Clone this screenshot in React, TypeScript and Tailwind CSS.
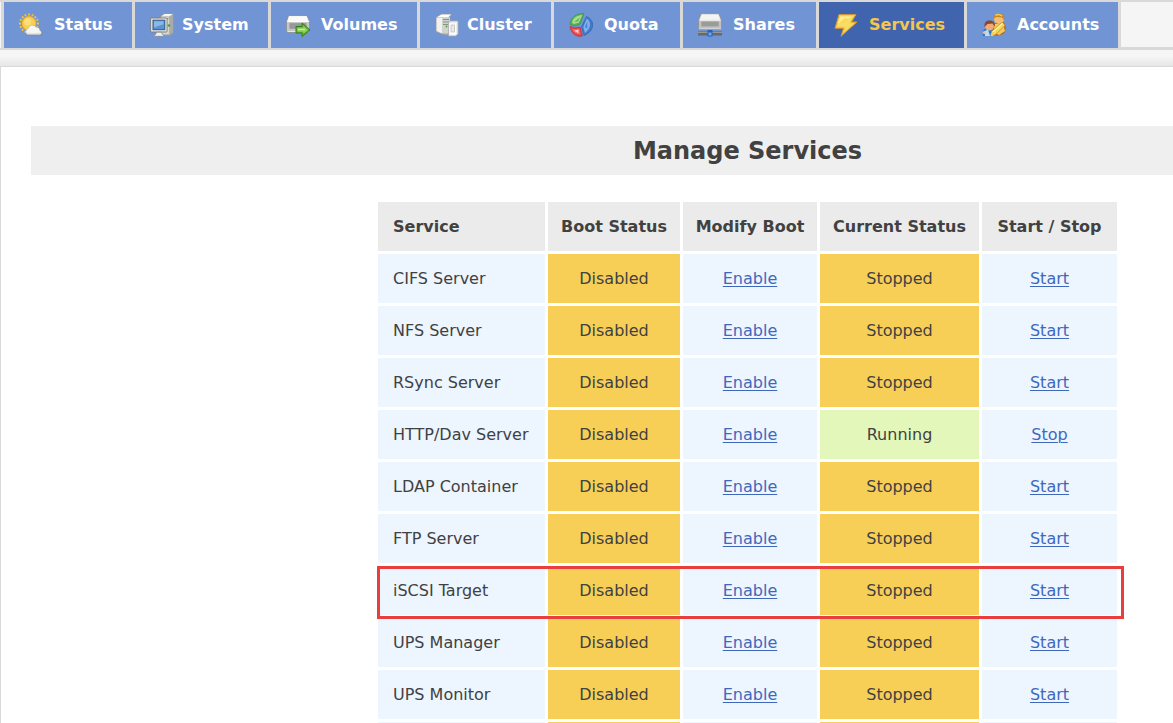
import type { ReactNode } from "react";

function StatusIcon() {
  return (
    <svg viewBox="0 0 24 24" className="size-6 shrink-0" aria-hidden="true">
      <g stroke="#f5c233" strokeWidth="1.9" strokeDasharray="2 1">
        <path d="M10 0.500v21M0 10.500h20M3 3.500l14 14M17 3.500l-14 14M6 1.300l8 18.400M14 1.300L6 19.700M0.800 6.500l18.400 8M19.200 6.500l-18.400 8" />
      </g>
      <circle cx="10" cy="10.500" r="7.400" fill="#eeb12c" />
      <circle cx="10" cy="10.500" r="6.400" fill="#fbcf4e" />
      <circle cx="8.500" cy="9" r="3.500" fill="#fde07a" />
      <path d="M10 22.600a3.400 3.400 0 0 1-.2-6.400 4.600 4.600 0 0 1 8.200-2.200 3.400 3.400 0 0 1 3.600 3.400 2.800 2.800 0 0 1 .6 5.200z" fill="#7c879e" />
      <path d="M9 21.500a3 3 0 0 1 .2-5.800 4.400 4.400 0 0 1 8-1.500 3.200 3.200 0 0 1 3.500 3.300 2.100 2.100 0 0 1 .3 4z" fill="#f5f5f5" stroke="#bfc2c8" strokeWidth=".6" />
      <path d="M8.500 19.500c3 1.200 8 1 12.500 0l-.5 1.600H9z" fill="#dcdfe4" />
    </svg>
  );
}

function SystemIcon() {
  return (
    <svg viewBox="0 0 24 24" className="size-6 shrink-0" aria-hidden="true">
      <path d="M10 3l4-2.500h9.500v20l-3 2h-9z" fill="#9a9b99" />
      <path d="M11 3.500L14.500 1H23l-3.500 2.500z" fill="#f4f4f1" />
      <path d="M11 4h8.500v17.500H11z" fill="#d5d6d1" />
      <path d="M19.500 4L23 1.500v18l-3.500 2z" fill="#aaaba6" />
      <path d="M12 5.500h6.500" stroke="#858782" />
      <circle cx="19" cy="12.500" r="1.300" fill="#39a935" />
      <rect x=".6" y="5" width="16.500" height="14" rx="1" fill="#e6e6e1" stroke="#777b7d" strokeWidth=".9" />
      <rect x="3" y="7.200" width="11.800" height="9.500" fill="#5a92d2" stroke="#315a8d" />
      <path d="M4 8.300h9.500v3L4 14.500z" fill="#8ab8e8" />
      <path d="M6.500 19.200h5l1 2.300c2 .4 1.500 1.800 0 1.800h-7c-1.500 0-2-1.400 0-1.800z" fill="#f0f0ec" stroke="#81817f" strokeWidth=".7" />
    </svg>
  );
}

function VolumesIcon() {
  return (
    <svg viewBox="0 0 24 24" className="size-6 shrink-0" aria-hidden="true">
      <path d="M2.500 2.500h18.500l2.500 6v9.500l-1 1.500h-21l-1-1.500v-9.500z" fill="#e8e8e6" stroke="#868a8e" strokeWidth=".8" />
      <path d="M3.500 3.300h16.800l2 4.700H1.700z" fill="#fafafa" />
      <path d="M1 9h22v9H1z" fill="#c6c8c6" />
      <path d="M3.500 10.500h17v5h-17z" fill="#a9aba9" />
      <path d="M3.500 11h17M3.500 13h17M3.500 15h8" stroke="#848786" strokeWidth="1" />
      <path d="M1.500 8.500h21" stroke="#fff" />
      <path d="M10 13.500h6v-3.500l8 7-8 6.500v-3.500h-6z" fill="#64af37" stroke="#347d20" strokeLinejoin="round" />
      <path d="M11.300 14.800h6v-2l4.500 4.200-4.500 3.500v-1.800h-6z" fill="#93d15c" />
      <path d="M12 16.500h7" stroke="#c9eba0" strokeWidth="1.200" />
    </svg>
  );
}

function ClusterIcon() {
  return (
    <svg viewBox="0 0 24 24" className="size-6 shrink-0" aria-hidden="true">
      <path d="M1 4l5-3h11l-2 3v17l-4 1.500L1 19z" fill="#a2a5a7" />
      <path d="M1.500 4.500l5-3H16l-3 3z" fill="#fff" />
      <path d="M1.500 5h5.500v15.500l-5.500-2.500z" fill="#f1f1ee" />
      <path d="M7 4.500h8V20.500H7z" fill="#d0d2ce" />
      <path d="M8 6.500h6M8 9h6M8 11.500h5" stroke="#8b8f8c" />
      <circle cx="11.500" cy="13.500" r="1" fill="#46ac3d" />
      <path d="M13.500 9.500l2-1.500h7.500v12.500l-2 2.500h-7.500z" fill="#efefed" stroke="#a6abaf" strokeWidth=".8" />
      <path d="M14.500 10.500h6.500v11h-6.500z" fill="#fff" />
      <rect x="16" y="12" width="3.500" height="7" fill="#eaeae7" stroke="#b4b6b3" strokeWidth=".7" />
    </svg>
  );
}

function QuotaIcon() {
  return (
    <svg viewBox="0 0 24 24" className="size-6 shrink-0" aria-hidden="true">
      <path d="M1 11.500C1.500 4.500 7 .3 15 .5L11 11 6 13z" fill="#58b255" stroke="#3b9347" strokeWidth=".7" />
      <path d="M3 9.800C4 5 8 2.300 13.200 2l-3.200 7.500-5 1.500z" fill="#a6dc90" />
      <path d="M5.300 9.200L11 4.300 9 8.300z" fill="#57b04f" />
      <path d="M17.500 3.500c8.500 3.500 8.500 14.500-2.500 19L12.500 14z" fill="#4379c8" stroke="#3162a8" strokeWidth=".7" />
      <path d="M17.800 5.500c4.500 3.500 4.500 9.500-1.800 14.500L14.300 14z" fill="#82b0ec" />
      <path d="M18.300 8.500v7l-2.500-1.500z" fill="#4b84d0" />
      <path d="M1 13.500l5 1.500 5-1 2.500 9C7.500 24.500 2 20.500 1 13.500z" fill="#e23e44" stroke="#bd3642" strokeWidth=".7" />
      <path d="M2.700 15.500l3.500.8 4-.8 1.700 6c-4 .5-7.500-1.500-9.200-6z" fill="#f06366" />
      <path d="M5 17.800l4.500-1.300v3.800z" fill="#ffc9c6" />
    </svg>
  );
}

function SharesIcon() {
  return (
    <svg viewBox="0 0 24 24" className="size-6 shrink-0" aria-hidden="true">
      <path d="M3 .7h18l2.500 6.500v8.500l-1 1h-21l-1-1v-8.500z" fill="#e0e0dd" stroke="#898c91" strokeWidth=".8" />
      <path d="M4 1.500h16l1.700 4.500H2.300z" fill="#f4f4f3" />
      <path d="M1 7.500h22v8H1z" fill="#c1c2bf" />
      <rect x="3.500" y="8.700" width="17" height="4.600" fill="#8c8f8c" />
      <path d="M4 10h16M4 12h16" stroke="#b4b6b2" strokeWidth=".7" />
      <path d="M2 7h20" stroke="#fff" />
      <rect y="18.500" width="24" height="4" fill="#66696d" />
      <path d="M0 19.500h24" stroke="#97989a" />
      <path d="M9.500 17h5v6.500h-5z" fill="#2463bd" />
      <rect x="10.500" y="19.500" width="3" height="3" fill="#69a8f5" />
    </svg>
  );
}

function ServicesIcon() {
  return (
    <svg viewBox="0 0 24 24" className="size-6 shrink-0" aria-hidden="true">
      <path d="M5 1.500h17l-4.500 7.500h5.500L7 23.300l2.500-8H1z" fill="#f6ce43" stroke="#cf9637" strokeLinejoin="round" />
      <path d="M6 3h13.500l-4.500 7.500h5L9.800 19l2-5.200H3.200z" fill="#f9dc68" />
      <path d="M6.500 3.500h11L12.500 10H3.800z" fill="#fdeb98" />
      <path d="M10 5.500h6l-4 5H5z" fill="#f9d955" />
    </svg>
  );
}

function AccountsIcon() {
  return (
    <svg viewBox="0 0 24 24" className="size-6 shrink-0" aria-hidden="true">
      <path d="M10 19l2-8 4-2h6l2 6-2 6-8 2z" fill="#b66b29" />
      <path d="M13 11h8l2 7-6 4-6-3z" fill="#f2cb5b" />
      <circle cx="17" cy="6" r="5" fill="#f7bd76" />
      <path d="M11.500 6C11 2 14 0 17 .5l1-.5 1 1c3 .5 4 3 3 6l-2-2.500-6-.5z" fill="#c9881c" />
      <path d="M13.500 2.500c2-1.500 5-1 6.500.5" stroke="#f6cf54" strokeWidth="1.500" fill="none" />
      <path d="M.5 23l1-6 4-3h5l3 4-1 5z" fill="#2d7ac8" />
      <circle cx="7.500" cy="13" r="4.500" fill="#efaa76" />
      <path d="M2.500 14c-.5-5 2-6.500 5-6.500 4 0 6 2.500 5 6l-2-3-5 .5z" fill="#88482e" />
      <path d="M3 18l3-1.500 2 6.500H3z" fill="#b9dcf7" />
      <path d="M9.500 18.500L20.500 9l2.500 3.500L13 22l-3.500.5z" fill="#f3d557" stroke="#bf872a" strokeWidth=".7" />
      <path d="M11 19L20.500 10.500" stroke="#fff1a1" strokeWidth="1.400" />
      <path d="M9 19.500l3 3.500H8.500z" fill="#f7c087" />
      <circle cx="2.500" cy="19.500" r="1.600" fill="#f7c087" />
    </svg>
  );
}

type Tab = { label: string; icon: ReactNode; width: string; tight?: boolean; active?: boolean };

const tabs: Tab[] = [
  { label: "Status", icon: <StatusIcon />, width: "w-[128px]" },
  { label: "System", icon: <SystemIcon />, width: "w-[133px]", tight: true },
  { label: "Volumes", icon: <VolumesIcon />, width: "w-[146px]" },
  { label: "Cluster", icon: <ClusterIcon />, width: "w-[131px]", tight: true },
  { label: "Quota", icon: <QuotaIcon />, width: "w-[126px]" },
  { label: "Shares", icon: <SharesIcon />, width: "w-[133px]" },
  { label: "Services", icon: <ServicesIcon />, width: "w-[145px]", active: true },
  { label: "Accounts", icon: <AccountsIcon />, width: "w-[151px]" },
];

const services = [
  { name: "CIFS Server", running: false },
  { name: "NFS Server", running: false },
  { name: "RSync Server", running: false },
  { name: "HTTP/Dav Server", running: true },
  { name: "LDAP Container", running: false },
  { name: "FTP Server", running: false },
  { name: "iSCSI Target", running: false, marked: true },
  { name: "UPS Manager", running: false },
  { name: "UPS Monitor", running: false },
];

const link = "text-[#3f68bd] underline underline-offset-2 decoration-1";

export default function App() {
  return (
    <div className="h-screen overflow-hidden bg-white font-['Verdana','DejaVu_Sans',sans-serif] text-base text-[#414141]">
      <header className="bg-[#f5f5f5]">
        <nav className="flex border-y-2 border-[#d9d9d9] pl-px">
          <div className="flex shrink-0 gap-[3px] bg-[#d9d9d9] px-[3px]">
            {tabs.map((tab) => (
              <a
                key={tab.label}
                href="#"
                className={`flex h-[46px] shrink-0 items-center pl-[15px] font-bold ${tab.width} ${
                  tab.tight ? "gap-2" : "gap-[11px]"
                } ${tab.active ? "bg-[#4064ad] text-[#f4c64f]" : "bg-[#7194d4] text-white"}`}
              >
                {tab.icon}
                <span>{tab.label}</span>
              </a>
            ))}
          </div>
          <div className="grow border-b border-[#d9d9d9]" />
        </nav>
        <div className="h-4 bg-linear-to-b from-[#f6f6f6] from-40% to-[#e6e6e6]" />
      </header>

      <main className="min-w-[1464px] border-t border-l border-[#d9d9d9] pt-[59px] pl-[30px]">
        <h1 className="bg-[#efefef] pt-[9px] pb-[7px] text-center text-2xl leading-[33px] font-bold">Manage Services</h1>

        <div className="mt-6 flex justify-center">
          <table className="w-[745px] table-fixed border-separate border-spacing-[3px] text-center">
            <colgroup>
              <col className="w-[167px]" />
              <col className="w-[132px]" />
              <col className="w-[134px]" />
              <col className="w-[159px]" />
              <col className="w-[135px]" />
            </colgroup>
            <thead>
              <tr className="h-[49px] whitespace-nowrap [&>th]:bg-[#ebebeb]">
                <th scope="col" className="pl-[15px] text-left">Service</th>
                <th scope="col">Boot Status</th>
                <th scope="col">Modify Boot</th>
                <th scope="col">Current Status</th>
                <th scope="col">Start / Stop</th>
              </tr>
            </thead>
            <tbody>
              {services.map((s) => (
                <tr key={s.name} className="h-[49px] whitespace-nowrap">
                  <td className="relative bg-[#edf5ff] pl-[15px] text-left">
                    {s.name}
                    {s.marked && (
                      <span className="pointer-events-none absolute top-0 -left-px z-10 h-[53px] w-[747px] border-3 border-[#e93e3e]" />
                    )}
                  </td>
                  <td className="bg-[#f7cf57]">Disabled</td>
                  <td className="bg-[#edf5ff]">
                    <a href="#" className={link}>Enable</a>
                  </td>
                  <td className={s.running ? "bg-[#e2f7b9]" : "bg-[#f7cf57]"}>{s.running ? "Running" : "Stopped"}</td>
                  <td className="bg-[#edf5ff]">
                    <a href="#" className={link}>{s.running ? "Stop" : "Start"}</a>
                  </td>
                </tr>
              ))}
              <tr className="h-[49px]">
                <td className="bg-[#edf5ff]" />
                <td className="bg-[#f7cf57]" />
                <td className="bg-[#edf5ff]" />
                <td className="bg-[#f7cf57]" />
                <td className="bg-[#edf5ff]" />
              </tr>
            </tbody>
          </table>
        </div>
      </main>
    </div>
  );
}
